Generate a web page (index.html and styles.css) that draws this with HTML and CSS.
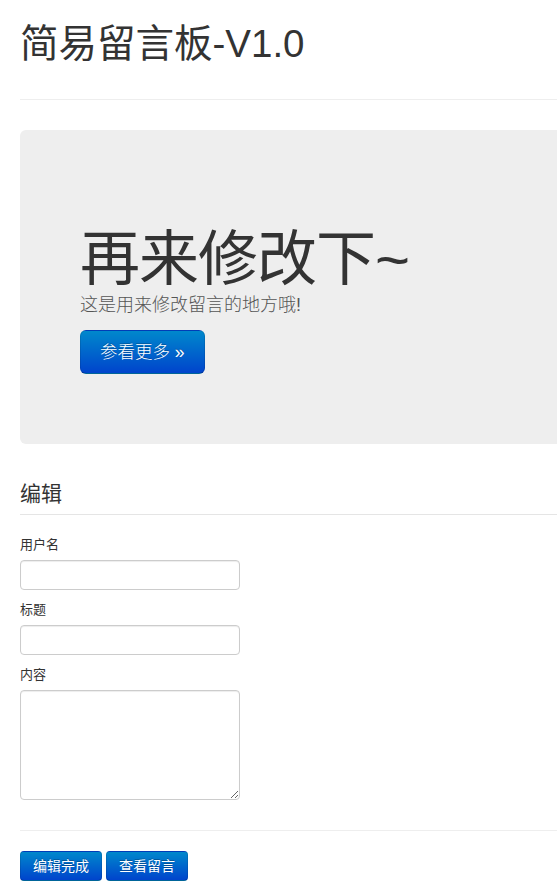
FILE: index.html
```html
<!DOCTYPE html>
<html lang="zh-CN">
<head>
  <meta charset="UTF-8" />
  <meta name="viewport" content="width=device-width, initial-scale=1.0" />
  <title>简易留言板-V1.0</title>
  <link rel="stylesheet" href="styles.css">
</head>
<body>
  <div class="container">
    <div class="page-header">
      <h1>简易留言板-V1.0</h1>
    </div>

    <div class="hero-unit">
      <h1>再来修改下~</h1>
      <p>这是用来修改留言的地方哦!</p>
      <p><a class="btn btn-primary btn-large" href="#">参看更多 &raquo;</a></p>
    </div>

    <form class="edit-form">
      <legend>编辑</legend>
      <label for="username">用户名</label>
      <input type="text" id="username" />
      <label for="title">标题</label>
      <input type="text" id="title" />
      <label for="content">内容</label>
      <textarea id="content"></textarea>
      <hr />
      <button type="submit" class="btn btn-primary">编辑完成</button>
      <button type="button" class="btn btn-primary">查看留言</button>
    </form>
  </div>
</body>
</html>
```

FILE: styles.css
```css
body, html {
  margin: 0;
  padding: 0;
  overflow-x: hidden;
}
body {
  font-family: "Liberation Sans", Arial, "Noto Sans CJK SC", sans-serif;
  font-size: 14px;
  line-height: 20px;
  color: #333;
  background: #fff;
}
.container {
  width: 940px;
  padding: 0 20px;
}
.page-header {
  margin: 0 0 30px;
  padding: 21px 0 32px;
  border-bottom: 1px solid #eee;
}
.page-header h1 {
  margin: 0;
  font-size: 38.5px;
  line-height: 46px;
  font-weight: normal;
}
.hero-unit {
  background: #eee;
  border-radius: 6px;
  padding: 60px;
  margin-bottom: 30px;
}
.hero-unit h1 {
  margin: 40px 0 0;
  font-size: 60px;
  line-height: 1;
  letter-spacing: -1px;
  font-weight: normal;
}
.hero-unit p {
  margin: 0 0 10px;
  font-size: 18px;
  font-weight: 200;
  line-height: 30px;
  color: #555;
}
.btn {
  display: inline-block;
  padding: 4px 12px;
  font-family: inherit;
  font-size: 14px;
  line-height: 20px;
  color: #fff;
  text-decoration: none;
  text-shadow: 0 -1px 0 rgba(0, 0, 0, 0.25);
  border: 1px solid rgba(0, 0, 0, 0.1);
  border-bottom-color: rgba(0, 0, 0, 0.25);
  border-radius: 4px;
  cursor: pointer;
}
.btn-primary {
  background: #006dcc linear-gradient(to bottom, #0088cc, #0044cc);
}
.btn-large {
  padding: 11px 19px;
  font-size: 17.5px;
  border-radius: 6px;
}
.edit-form legend {
  display: block;
  width: 100%;
  padding: 0;
  margin-bottom: 20px;
  font-size: 21px;
  line-height: 40px;
  color: #333;
  border-bottom: 1px solid #e5e5e5;
}
.edit-form label {
  display: block;
  margin-bottom: 5px;
  font-size: 13px;
}
.edit-form input,
.edit-form textarea {
  display: block;
  box-sizing: border-box;
  width: 220px;
  height: 30px;
  margin: 0 0 10px;
  padding: 4px 6px;
  font-family: inherit;
  font-size: 14px;
  border: 1px solid #ccc;
  border-radius: 4px;
  box-shadow: inset 0 1px 1px rgba(0, 0, 0, 0.075);
}
.edit-form textarea {
  height: 110px;
}
.edit-form hr {
  margin: 30px 0 20px;
  border: 0;
  border-top: 1px solid #eee;
}
```
